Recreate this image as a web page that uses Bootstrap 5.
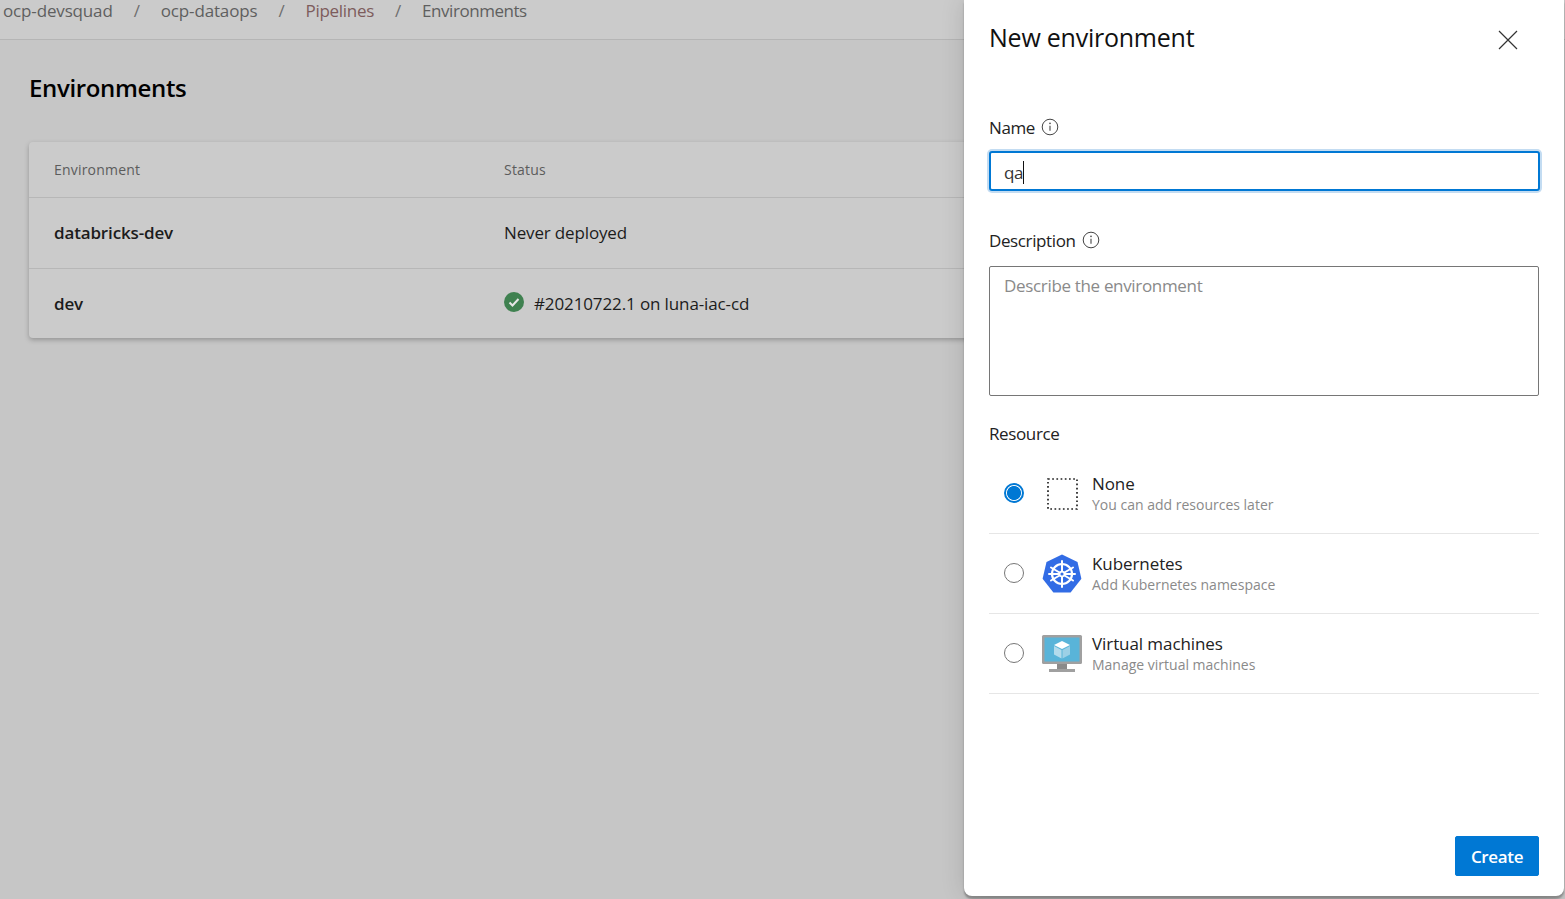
<!doctype html>
<html lang="en"><head><meta charset="utf-8"><title>Environments</title>
<link href="https://cdn.jsdelivr.net/npm/bootstrap@5.3.0/dist/css/bootstrap.min.css" rel="stylesheet">
<style>
html,body{height:100%;overflow:hidden}
body{background:#c6c6c6;font-family:"Open Sans","Noto Sans",sans-serif;font-size:16px;color:#000;letter-spacing:-.35px;position:relative}
.crumbs{height:40px;background:#cbcbcb;border-bottom:1px solid #b5b5b5;padding:0 0 0 3px;margin:0;align-items:flex-start;font-size:17px;line-height:22px;color:#5f5f5f;letter-spacing:-.15px}
.crumbs .sep{margin:0 21px;color:#6e6e6e}
.crumb-red{color:#7d5c5c;letter-spacing:-.3px}
.crumb-last{letter-spacing:-.45px}
.page-title{font-size:24px;font-weight:600;line-height:32px;margin:32px 0 38px 29px;color:#000;letter-spacing:-.35px}
.env-card{margin-left:29px;width:960px;background:#cbcbcb;border:0;border-radius:4px;box-shadow:0 2px 5px rgba(0,0,0,.25)}
.env-row{display:flex;align-items:center;border-bottom:1px solid #b7b7b7;padding-left:25px;height:71px;color:#1c1c1c;font-size:17px;letter-spacing:-.15px}
.env-row:last-child{border-bottom:0;height:69px}
.env-row.head{height:56px;font-size:14px;font-weight:500;color:#5c5c5c;letter-spacing:.2px}
.c1{width:450px;font-weight:600}
.head .c1{font-weight:500}
.status-text{letter-spacing:-.12px}
.status-ico{margin:-4px 10px 0 0}
.panel{position:absolute;left:964px;top:0;width:600px;height:896px;background:#fff;border-radius:0 0 8px 8px;padding:0 25px 20px 25px;display:flex;flex-direction:column;box-shadow:0 3px 2px rgba(0,0,0,.28),0 0 24px rgba(0,0,0,.14)}
.panel-head{display:flex;justify-content:space-between;align-items:flex-start;height:100px;padding-top:20px}
.panel-head h2{font-size:25px;font-weight:500;line-height:34px;margin:0;color:#111;letter-spacing:-.24px}
.x-btn{border:0;background:none;padding:0;margin:10px 21px 0 0;line-height:0}
.fld-label{font-size:17px;line-height:24px;color:#222;display:flex;align-items:center;gap:6px;margin:0;letter-spacing:-.38px}
.fld-label svg{position:relative;top:-1px}
.qa-input.form-control{height:40px;border:2px solid #0078d4;border-radius:3px;box-shadow:0 0 0 2px #c3dcf2;font-size:17px;padding:2px 13px 0;color:#333;margin:11px 0 38px;width:551px;background:#fff;letter-spacing:-.35px}
.qa-input.form-control:focus{box-shadow:0 0 0 2px #c3dcf2;border-color:#0078d4}
.caret{position:absolute;left:59px;top:161px;width:1px;height:23px;background:#111}
.desc.form-control{height:130px;border:1px solid #767676;border-radius:2px;font-size:17px;padding:6px 14px;margin:13px 0 26px;resize:none;letter-spacing:-.33px}
.desc.form-control::placeholder{color:#8a8a8a}
.res-list{margin-top:8px}
.res-list .res-item.res-item{height:80px;display:flex;align-items:center;border:0;border-bottom:1px solid #e6e6e6;border-radius:0;padding:0 0 0 15px}
.res-item .form-check-input{width:20px;height:20px;margin:-2px 0 0;border:1px solid #777;flex:none}
.res-item .form-check-input:checked{background-color:#fff;border:2px solid #0078d4;background-image:radial-gradient(circle,#0078d4 0,#0078d4 6.6px,#fff 7.4px)}
.res-ico{width:42px;height:42px;margin:0 9px 0 17px;flex:none;display:flex;align-items:center;justify-content:center}
.res-t{font-size:17px;font-weight:500;line-height:22px;color:#222;letter-spacing:-.08px}
.res-s{font-size:14px;line-height:20px;color:#8a8a8a;letter-spacing:0}
.create{background:#0078d4;border-color:#0078d4;width:84px;height:40px;font-size:17px;font-weight:600;border-radius:2px;padding:1px 0 0;margin-top:auto;align-self:flex-end;letter-spacing:-.35px}
</style></head>
<body>
<nav class="crumbs d-flex">
  <span>ocp-devsquad</span><span class="sep">/</span><span>ocp-dataops</span><span class="sep">/</span><span class="crumb-red">Pipelines</span><span class="sep">/</span><span class="crumb-last">Environments</span>
</nav>
<h1 class="page-title">Environments</h1>
<div class="card env-card">
  <div class="env-row head"><div class="c1">Environment</div><div>Status</div></div>
  <div class="env-row"><div class="c1">databricks-dev</div><div>Never deployed</div></div>
  <div class="env-row"><div class="c1">dev</div><div class="d-flex align-items-center">
    <svg class="status-ico" width="20" height="20" viewBox="0 0 20 20"><circle cx="10" cy="10" r="10" fill="#3f8150"/><path d="M5.5 10.500l3 3 6-6.500" fill="none" stroke="#e6e6e6" stroke-width="2"/></svg>
    <span class="status-text">#20210722.1 on luna-iac-cd</span></div></div>
</div>

<aside class="panel">
  <div class="panel-head">
    <h2>New environment</h2>
    <button class="x-btn" type="button" aria-label="Close"><svg width="20" height="20" viewBox="0 0 20 20"><path d="M1 1l18 18M19 1L1 19" stroke="#333" stroke-width="1.200" fill="none"/></svg></button>
  </div>
  <div class="fld-label mt-3">Name
    <svg width="18" height="18" viewBox="0 0 18 18"><circle cx="9" cy="9" r="7.800" fill="none" stroke="#444" stroke-width="1"/><path d="M9 7.800v5" stroke="#444" stroke-width="1.100"/><circle cx="9" cy="5.400" r=".8" fill="#444"/></svg>
  </div>
  <input class="form-control qa-input" value="qa" aria-label="Name">
  <span class="caret"></span>
  <div class="fld-label">Description
    <svg width="18" height="18" viewBox="0 0 18 18"><circle cx="9" cy="9" r="7.800" fill="none" stroke="#444" stroke-width="1"/><path d="M9 7.800v5" stroke="#444" stroke-width="1.100"/><circle cx="9" cy="5.400" r=".8" fill="#444"/></svg>
  </div>
  <textarea class="form-control desc" placeholder="Describe the environment" aria-label="Description"></textarea>
  <div class="fld-label">Resource</div>
  <div class="list-group list-group-flush res-list">
    <label class="list-group-item res-item">
      <input class="form-check-input" type="radio" name="r" checked>
      <span class="res-ico"><svg width="31" height="32" viewBox="0 0 31 32"><rect x="1" y="1" width="29" height="30" fill="none" stroke="#222" stroke-width="1.700" stroke-dasharray="1.700 2.500"/></svg></span>
      <span><div class="res-t">None</div><div class="res-s">You can add resources later</div></span>
    </label>
    <label class="list-group-item res-item">
      <input class="form-check-input" type="radio" name="r">
      <span class="res-ico"><svg width="40" height="40" viewBox="0 0 40 40">
        <path d="M20 .5L35.500 8l3.900 16.800-10.800 13.700H11.400L.6 24.800 4.500 8z" fill="#326ce5"/>
        <g fill="none" stroke="#fff"><circle cx="20" cy="20" r="10" stroke-width="2.200"/><circle cx="20" cy="20" r="2.400" stroke-width="1.600"/>
        <path stroke-width="2" stroke-linecap="round" d="M20 7v10M20 23v10M31 13.500l-8.500 5M17.500 21.500l-8.500 5M9 13.500l8.500 5M22.500 21.500l8.500 5M33 20H23M17 20H7"/></g>
      </svg></span>
      <span><div class="res-t">Kubernetes</div><div class="res-s">Add Kubernetes namespace</div></span>
    </label>
    <label class="list-group-item res-item">
      <input class="form-check-input" type="radio" name="r">
      <span class="res-ico"><svg width="42" height="38" viewBox="0 0 42 38">
        <rect x="1" y="0" width="40" height="29" rx="1.500" fill="#a0a0a0"/><rect x="3.500" y="2.500" width="35" height="24" fill="#59b4d9"/>
        <path d="M21 6l8 4-8 4-8-4z" fill="#fff"/><path d="M13 11l7.500 4v8.500L13 19.500z" fill="#b3dbec"/><path d="M29 11l-7.500 4v8.500l7.500-4z" fill="#9cd0e6"/>
        <rect x="16" y="29" width="10" height="5" fill="#8a8a8a"/><rect x="8" y="34" width="26" height="3" fill="#a0a0a0"/>
      </svg></span>
      <span><div class="res-t">Virtual machines</div><div class="res-s">Manage virtual machines</div></span>
    </label>
  </div>
  <button class="btn btn-primary create" type="button">Create</button>
</aside>
</body></html>
